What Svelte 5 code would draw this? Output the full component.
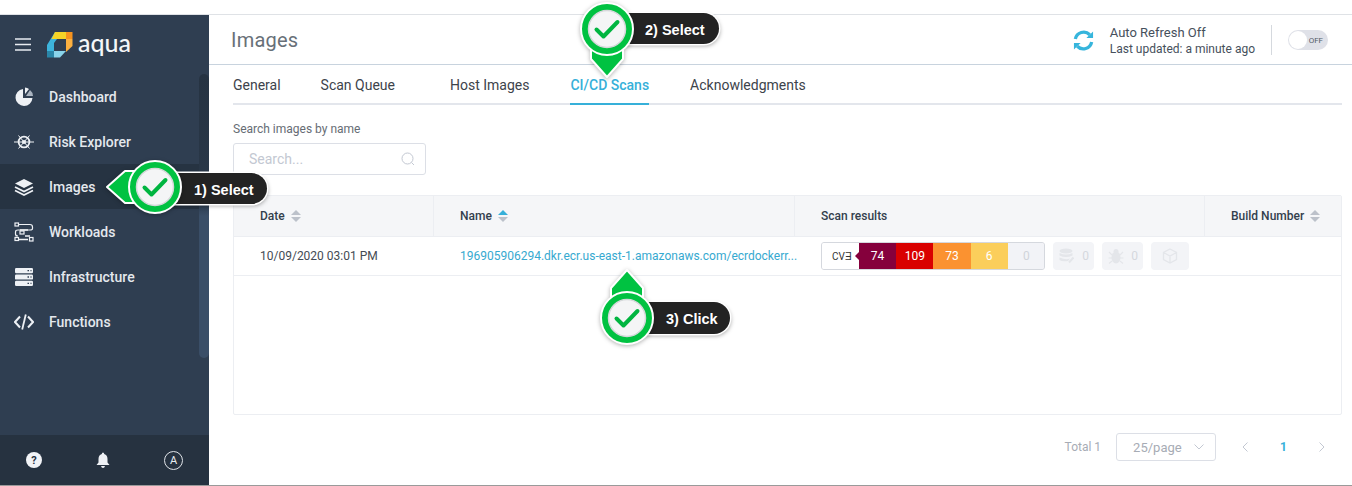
<script lang="ts">
const tabs = [
	{ label: "General", gap: 40 },
	{ label: "Scan Queue", gap: 55 },
	{ label: "Host Images", gap: 41 },
	{ label: "CI/CD Scans", gap: 41, active: true },
	{ label: "Acknowledgments", gap: 0 },
]
const navItems = [
	{ label: "Dashboard", icon: "pie" },
	{ label: "Risk Explorer", icon: "helm" },
	{ label: "Images", icon: "layers", active: true },
	{ label: "Workloads", icon: "flow" },
	{ label: "Infrastructure", icon: "server" },
	{ label: "Functions", icon: "code" },
]
const severity = [
	{ n: 74, bg: "#85003c", fg: "#fff" },
	{ n: 109, bg: "#d90000", fg: "#fff" },
	{ n: 73, bg: "#fb9230", fg: "#fff" },
	{ n: 6, bg: "#fbce5b", fg: "#fff" },
	{ n: 0, bg: "#f2f3f7", fg: "#d0d3da" },
]
</script>

{#snippet pin(angle: number)}
	<svg class="pin" viewBox="-50 -50 100 100" width="100" height="100">
		<g transform="rotate({angle})">
			<path d="M-48 0 L-30 -16 L0 -16 L0 16 L-30 16 Z" fill="#00c241" stroke="#fff" stroke-width="2" stroke-linejoin="round" />
		</g>
		<circle r="26" fill="#00c241" stroke="#fff" stroke-width="2" />
		<circle r="18.5" fill="#f4f5f6" stroke="#d5d8da" stroke-width="1.5" />
		<path d="M-10.5 0.5 L-3.5 7.5 L10.5 -7" fill="none" stroke="#00b540" stroke-width="4" stroke-linecap="round" stroke-linejoin="round" />
	</svg>
{/snippet}

{#snippet sort(active: boolean)}
	<svg class="sort" width="10" height="12" viewBox="0 0 10 12">
		<path d="M5 0 L10 5 H0 Z" fill={active ? "#36b0d9" : "#bcc1ca"} />
		<path d="M5 12 L10 7 H0 Z" fill="#bcc1ca" />
	</svg>
{/snippet}

<div class="page">
	<div class="app">
		<aside class="sidebar">
			<div class="brand">
				<svg width="16" height="13" viewBox="0 0 16 13">
					<path d="M0 1H16M0 6.5H16M0 12H16" stroke="#e8ecf1" stroke-width="1.5" />
				</svg>
				<svg class="logo" width="26" height="26" viewBox="0 0 26 26">
					<polygon points="8,0 19,0 19,7 10,7 7,11 7,13 0,13" fill="#3db4dc" />
					<polygon points="8,0 19,0 19,7 10,7 4.5,7" fill="#f5d327" />
					<polygon points="19,0 25.5,0 25.5,7 19,7" fill="#f6931e" />
					<polygon points="19,7 25.5,7 25.5,14 19,20" fill="#fbb040" />
					<polygon points="0,13 7,13 7,19 0,19" fill="#3db4dc" />
					<polygon points="0,19 7,19 7,25.5 0,25.5" fill="#2a86a8" />
					<polygon points="7,19 19,19 13,25.5 7,25.5" fill="#8ad4ea" />
				</svg>
				<span class="wordmark">aqua</span>
			</div>

			<nav>
				{#each navItems as item}
					<div class="nav-item" class:active={item.active}>
						<svg width="20" height="20" viewBox="0 0 20 20" class="nav-icon">
							{#if item.icon === "pie"}
								<path d="M9 2 A8.5 8.5 0 1 0 18.5 11 H9 Z" fill="#eef1f5" />
								<path d="M11 0.5 A8 8 0 0 1 15 2 L11 7 Z" fill="#eef1f5" />
								<path d="M16 3 A8 8 0 0 1 19 9 H12 Z" fill="#aab4c0" />
							{:else if item.icon === "helm"}
								<circle cx="10" cy="10" r="5.4" fill="none" stroke="#eef1f5" stroke-width="1.8" />
								<circle cx="10" cy="10" r="2" fill="#eef1f5" />
								<path d="M0 10H20M4.5 3.5L15.5 16.5M15.5 3.5L4.5 16.5" stroke="#eef1f5" stroke-width="1" />
							{:else if item.icon === "layers"}
								<path d="M10 2 L19 6.5 L10 11 L1 6.5 Z" fill="#eef1f5" />
								<path d="M1 10 L10 14.5 L19 10" fill="none" stroke="#eef1f5" stroke-width="1.7" />
								<path d="M1 13.5 L10 18 L19 13.5" fill="none" stroke="#eef1f5" stroke-width="1.7" />
							{:else if item.icon === "flow"}
								<path d="M4 2.5H16Q18.5 2.5 18.5 5V6.5Q18.5 8 16 8H4Q1.5 8 1.5 10V12Q1.5 14 4 14H1.5" fill="none" stroke="#eef1f5" stroke-width="1.2" />
								<path d="M6 8H14M11 14H16M4 17.5H14" stroke="#eef1f5" stroke-width="1.3" />
								<rect x="1" y="1" width="3.5" height="3" fill="#2f3e51" stroke="#eef1f5" stroke-width="1.2" />
								<rect x="6" y="9" width="4" height="3" fill="none" stroke="#eef1f5" stroke-width="1.2" />
								<rect x="15.5" y="15.5" width="3.5" height="3.5" fill="none" stroke="#eef1f5" stroke-width="1.2" />
								<rect x="1" y="15.5" width="3.5" height="3" fill="none" stroke="#eef1f5" stroke-width="1.2" />
							{:else if item.icon === "server"}
								<rect x="1" y="1" width="18" height="5.2" rx="1.2" fill="#eef1f5" />
								<rect x="1" y="7.4" width="18" height="5.2" rx="1.2" fill="#eef1f5" />
								<rect x="1" y="13.8" width="18" height="5.2" rx="1.2" fill="#eef1f5" />
								<path d="M13.5 3.6h1.5M16.5 3.6h1M13.5 10h1.5M16.5 10h1M13.5 16.4h1.5M16.5 16.4h1" stroke="#2f3e51" stroke-width="1.4" />
							{:else}
								<path d="M6 4.5 L1 10 L6 15.5 M14 4.5 L19 10 L14 15.5" fill="none" stroke="#eef1f5" stroke-width="2" />
								<path d="M11.8 2.5 L8.2 17.5" stroke="#eef1f5" stroke-width="1.8" />
							{/if}
						</svg>
						<span>{item.label}</span>
					</div>
				{/each}
			</nav>

			<div class="scrolltrack"></div>

			<div class="side-foot">
				<svg width="16" height="16" viewBox="0 0 16 16">
					<circle cx="8" cy="8" r="8" fill="#f2f4f7" />
					<text x="8" y="12" text-anchor="middle" class="help">?</text>
				</svg>
				<svg width="14" height="16" viewBox="0 0 14 16">
					<path d="M7 0.5 Q8.2 0.5 8.2 2 Q11.5 3 11.5 7 V10.5 L13.5 13 H0.5 L2.5 10.5 V7 Q2.5 3 5.8 2 Q5.8 0.5 7 0.5 Z" fill="#eef1f5" />
					<path d="M5 14 H9 Q8.5 16 7 16 Q5.5 16 5 14 Z" fill="#eef1f5" />
				</svg>
				<span class="avatar">A</span>
			</div>
		</aside>

		<main class="main">
			<header class="topbar">
				<h1>Images</h1>
				<div class="refresh">
					<svg width="23" height="23" viewBox="0 0 24 24">
						<path d="M3.5 10.5 A8.8 8.8 0 0 1 18.5 6" fill="none" stroke="#36b5dc" stroke-width="3.4" />
						<path d="M20.5 13.5 A8.8 8.8 0 0 1 5.5 18" fill="none" stroke="#36b5dc" stroke-width="3.4" />
						<path d="M22 2.5 V9.5 H15 Z" fill="#36b5dc" />
						<path d="M2 21.5 V14.5 H9 Z" fill="#36b5dc" />
					</svg>
					<div class="refresh-text">
						<div class="refresh-title">Auto Refresh Off</div>
						<div>Last updated: a minute ago</div>
					</div>
					<div class="divider"></div>
					<div class="toggle"><span class="knob"></span><span>OFF</span></div>
				</div>
			</header>

			<div class="content">
				<div class="tabs">
					{#each tabs as tab}
						<div class="tab" class:active={tab.active} style="margin-right: {tab.gap}px">{tab.label}</div>
					{/each}
				</div>

				<label class="search-label" for="search">Search images by name</label>
				<div class="search">
					<input id="search" placeholder="Search..." />
					<svg width="14" height="14" viewBox="0 0 14 14">
						<circle cx="6.5" cy="6.5" r="5.5" fill="none" stroke="#c3c8d2" stroke-width="1" />
						<path d="M10.5 10.5 L13 13" stroke="#c3c8d2" stroke-width="1" />
					</svg>
				</div>

				<div class="table">
					<div class="row head">
						<div class="cell">Date {@render sort(false)}</div>
						<div class="cell">Name {@render sort(true)}</div>
						<div class="cell">Scan results</div>
						<div class="cell">Build Number {@render sort(false)}</div>
					</div>
					<div class="row body">
						<div class="cell">10/09/2020 03:01 PM</div>
						<div class="cell link">196905906294.dkr.ecr.us-east-1.amazonaws.com/ecrdockerr...</div>
						<div class="cell scans">
							<div class="cve">
								<div class="cve-name">CVƎ</div>
								{#each severity as s}
									<div class="sev" style="background: {s.bg}; color: {s.fg}">{s.n}</div>
								{/each}
							</div>
							<div class="chip">
								<svg width="15" height="16" viewBox="0 0 15 16">
									<ellipse cx="7" cy="3" rx="6.5" ry="2.5" fill="#e4e6ea" />
									<path d="M0.5 5 Q7 8 13.5 5 V7.5 Q7 10.5 0.5 7.5 Z M0.5 9.5 Q7 12.5 11 10.5 L9 13 Q3 14 0.5 12 Z" fill="#e4e6ea" />
									<path d="M10 14.5 L14.5 9.5" stroke="#e4e6ea" stroke-width="2" />
								</svg>
								<span>0</span>
							</div>
							<div class="chip">
								<svg width="16" height="16" viewBox="0 0 16 16">
									<ellipse cx="8" cy="9.5" rx="4.5" ry="6" fill="#e4e6ea" />
									<circle cx="8" cy="3.5" r="2.5" fill="#e4e6ea" />
									<path d="M1 4 L4 7 M15 4 L12 7 M0.5 10 H4 M15.5 10 H12 M1 15.5 L4 13 M15 15.5 L12 13" stroke="#e4e6ea" stroke-width="1.2" />
								</svg>
								<span>0</span>
							</div>
							<div class="chip box">
								<svg width="16" height="16" viewBox="0 0 16 16">
									<path d="M8 1 L14.5 4.5 V11.5 L8 15 L1.5 11.5 V4.5 Z M1.5 4.5 L8 8 L14.5 4.5 M8 8 V15" fill="none" stroke="#e4e6ea" stroke-width="1.3" />
								</svg>
							</div>
						</div>
						<div class="cell"></div>
					</div>
				</div>

				<div class="pager">
					<span>Total 1</span>
					<div class="per-page">
						<span>25/page</span>
						<svg width="10" height="6" viewBox="0 0 10 6"><path d="M0.5 0.5 L5 5 L9.5 0.5" fill="none" stroke="#c3c8d2" /></svg>
					</div>
					<svg class="prev" width="6" height="10" viewBox="0 0 6 10"><path d="M5.5 0.5 L1 5 L5.5 9.5" fill="none" stroke="#c3c8d2" /></svg>
					<span class="current">1</span>
					<svg class="next" width="6" height="10" viewBox="0 0 6 10"><path d="M0.5 0.5 L5 5 L0.5 9.5" fill="none" stroke="#c3c8d2" /></svg>
				</div>
			</div>
		</main>
	</div>

	<!-- walkthrough callouts sit over the screenshot -->
	<div class="tag tag1">1) Select</div>
	<div class="marker m1">{@render pin(0)}</div>
	<div class="tag tag2">2) Select</div>
	<div class="marker m2">{@render pin(-90)}</div>
	<div class="tag tag3">3) Click</div>
	<div class="marker m3">{@render pin(90)}</div>
</div>

<style>
:global(body) {
	margin: 0;
	background: #fff;
}

.page {
	position: relative;
	width: 1352px;
	height: 486px;
	overflow: hidden;
	font-family: Roboto, "Liberation Sans", sans-serif;
	box-sizing: border-box;
	padding-top: 14px;
}

.app {
	display: flex;
	height: 472px;
	box-sizing: border-box;
	border-top: 1px solid #dfe2e6;
	border-bottom: 1px solid #9a9a9a;
}

.sidebar {
	position: relative;
	width: 209px;
	flex: none;
	display: flex;
	flex-direction: column;
	background: #2f3e51;
	color: #e8ecf1;
}

.brand {
	display: flex;
	align-items: center;
	height: 59px;
	padding-left: 15px;
	flex: none;
}

.logo {
	margin-left: 16px;
}

.wordmark {
	font-family: Lato, sans-serif;
	font-size: 25px;
	font-weight: 500;
	color: #f4f6f8;
	margin-left: 5px;
	margin-top: -6px;
}

nav {
	display: flex;
	flex-direction: column;
}

.nav-item {
	display: flex;
	align-items: center;
	height: 45px;
	padding-left: 14px;
	font-size: 14px;
	font-weight: 500;
	color: #e4e8ed;
}

.nav-item.active {
	background: #263342;
}

.nav-icon {
	margin-right: 15px;
	flex: none;
}

.scrolltrack {
	position: absolute;
	top: 59px;
	right: 0;
	width: 10px;
	height: 284px;
	border-radius: 5px;
	background: linear-gradient(#263342 0%, #2a3849 45%, #3a4e67 50%, #3a4e67 100%);
}

.side-foot {
	margin-top: auto;
	height: 50px;
	flex: none;
	display: flex;
	align-items: center;
	justify-content: space-between;
	padding: 0 26px 0 26px;
	background: #263240;
}

.help {
	font-size: 11px;
	font-weight: 700;
	fill: #263240;
}

.avatar {
	width: 17px;
	height: 17px;
	border: 1px solid #dfe3e8;
	border-radius: 50%;
	font-size: 11px;
	display: flex;
	align-items: center;
	justify-content: center;
}

.main {
	flex: 1;
	display: flex;
	flex-direction: column;
	min-width: 0;
}

.topbar {
	height: 50px;
	flex: none;
	box-sizing: border-box;
	border-bottom: 1px solid #c8d3de;
	display: flex;
	align-items: center;
	justify-content: space-between;
	padding: 1px 24px 0 22px;
}

h1 {
	margin: 0;
	font-size: 20px;
	font-weight: 400;
	color: #687078;
	letter-spacing: 0.2px;
}

.refresh {
	display: flex;
	align-items: center;
}

.refresh-text {
	margin-left: 15px;
	font-size: 12px;
	line-height: 16px;
	color: #46505c;
	padding-top: 2px;
}

.refresh-title {
	font-size: 13px;
}

.divider {
	width: 1px;
	height: 30px;
	background: #d5d9de;
	margin: 0 16px;
}

.toggle {
	position: relative;
	width: 40px;
	height: 20px;
	border-radius: 10px;
	background: #dfe1e8;
	font-size: 8px;
	color: #555d68;
	display: flex;
	align-items: center;
	justify-content: flex-end;
	padding-right: 5px;
	box-sizing: border-box;
}

.knob {
	position: absolute;
	left: 1px;
	top: 1px;
	width: 18px;
	height: 18px;
	border-radius: 50%;
	background: #fff;
}

.content {
	flex: 1;
	display: flex;
	flex-direction: column;
	align-items: flex-start;
	padding: 0 10px 0 24px;
}

.tabs {
	display: flex;
	align-self: stretch;
	height: 38px;
	border-bottom: 2px solid #e3e6ec;
	box-sizing: content-box;
}

.tab {
	font-size: 14px;
	line-height: 41px;
	height: 38px;
	color: #3d434b;
}

.tab.active {
	color: #36b0d9;
	font-weight: 500;
	border-bottom: 2px solid #36b0d9;
}

.search-label {
	margin-top: 17px;
	font-size: 12px;
	line-height: 14px;
	color: #666c74;
}

.search {
	margin-top: 7px;
	width: 193px;
	height: 32px;
	box-sizing: border-box;
	border: 1px solid #dcdfe6;
	border-radius: 3px;
	display: flex;
	align-items: center;
	justify-content: space-between;
	padding: 0 10px 0 15px;
}

input {
	border: 0;
	outline: 0;
	width: 140px;
	padding: 0;
	font: 14px Roboto, sans-serif;
}

input::placeholder {
	color: #c3c8d2;
}

.table {
	margin-top: 20px;
	align-self: stretch;
	height: 220px;
	box-sizing: border-box;
	border: 1px solid #eceef2;
	border-radius: 2px;
}

.row {
	display: grid;
	grid-template-columns: 199px 361px 410px 1fr;
	border-bottom: 1px solid #eceef2;
}

.row.head {
	height: 41px;
	box-sizing: border-box;
	background: #f5f6f8;
	font-size: 12px;
	font-weight: 500;
	color: #333f4d;
}

.row.head .cell + .cell {
	border-left: 1px solid #eceef2;
}

.row.body {
	height: 39px;
	box-sizing: border-box;
	font-size: 12px;
	color: #444b54;
}

.row.body .cell + .cell {
	padding-left: 27px;
}

.cell {
	display: flex;
	align-items: center;
	padding-left: 26px;
	white-space: nowrap;
	min-width: 0;
	box-sizing: border-box;
}

.sort {
	margin-left: 6px;
}

.link {
	color: #36a9d0;
}

.scans {
	gap: 8px;
}

.cve {
	display: flex;
	width: 224px;
	height: 28px;
	box-sizing: border-box;
	border: 1px solid #d5d8de;
	border-radius: 3px;
	overflow: hidden;
	background: #f2f3f7;
}

.cve-name {
	position: relative;
	width: 37px;
	background: #fff;
	font-size: 10px;
	color: #333;
	display: flex;
	align-items: center;
	padding-left: 10px;
	box-sizing: border-box;
	flex: none;
}

.cve-name::after {
	content: "";
	position: absolute;
	right: -1px;
	top: 8px;
	border: 5px solid transparent;
	border-left: 0;
	border-right: 5px solid #85003c;
}

.sev {
	width: 37.2px;
	flex: none;
	font-size: 12px;
	display: flex;
	align-items: center;
	justify-content: center;
}

.chip {
	width: 41px;
	height: 28px;
	box-sizing: border-box;
	background: #f3f4f7;
	border-radius: 4px;
	display: flex;
	align-items: center;
	justify-content: space-between;
	padding: 0 5px 0 6px;
	color: #d5d8de;
	font-size: 12px;
}

.chip.box {
	width: 38px;
	justify-content: center;
	padding: 0;
}

.pager {
	align-self: flex-end;
	display: flex;
	align-items: center;
	margin-top: 18px;
	margin-right: 17px;
	font-size: 12px;
	color: #a7acb5;
}

.per-page {
	width: 100px;
	height: 28px;
	box-sizing: border-box;
	margin-left: 15px;
	border: 1px solid #dcdfe6;
	border-radius: 3px;
	display: flex;
	align-items: center;
	justify-content: space-between;
	padding: 0 11px 0 16px;
	font-size: 13px;
}

.prev {
	margin-left: 26px;
}

.current {
	margin-left: 32px;
	font-weight: 700;
	color: #36b0d9;
}

.next {
	margin-left: 32px;
}

.marker {
	position: absolute;
	width: 100px;
	height: 100px;
}

.pin {
	display: block;
	overflow: visible;
	filter: drop-shadow(0 1px 2px rgba(0, 0, 0, 0.3));
}

.m1 { left: 105px; top: 137px; }
.m2 { left: 557px; top: -21px; }
.m3 { left: 577px; top: 268px; }

.tag {
	position: absolute;
	box-sizing: border-box;
	height: 31px;
	line-height: 34px;
	background: #232323;
	color: #fff;
	font-family: "Liberation Sans", sans-serif;
	font-size: 14.5px;
	font-weight: 700;
	border-radius: 0 16px 16px 0;
	box-shadow: 0 0 0 1.5px #fff, 1px 2px 4px rgba(0, 0, 0, 0.35);
}

.tag1 { left: 165px; top: 173px; width: 102px; padding-left: 29px; }
.tag2 { left: 620px; top: 13px; width: 99px; padding-left: 25px; }
.tag3 { left: 640px; top: 302px; width: 90px; padding-left: 26px; height: 32px; }
</style>
